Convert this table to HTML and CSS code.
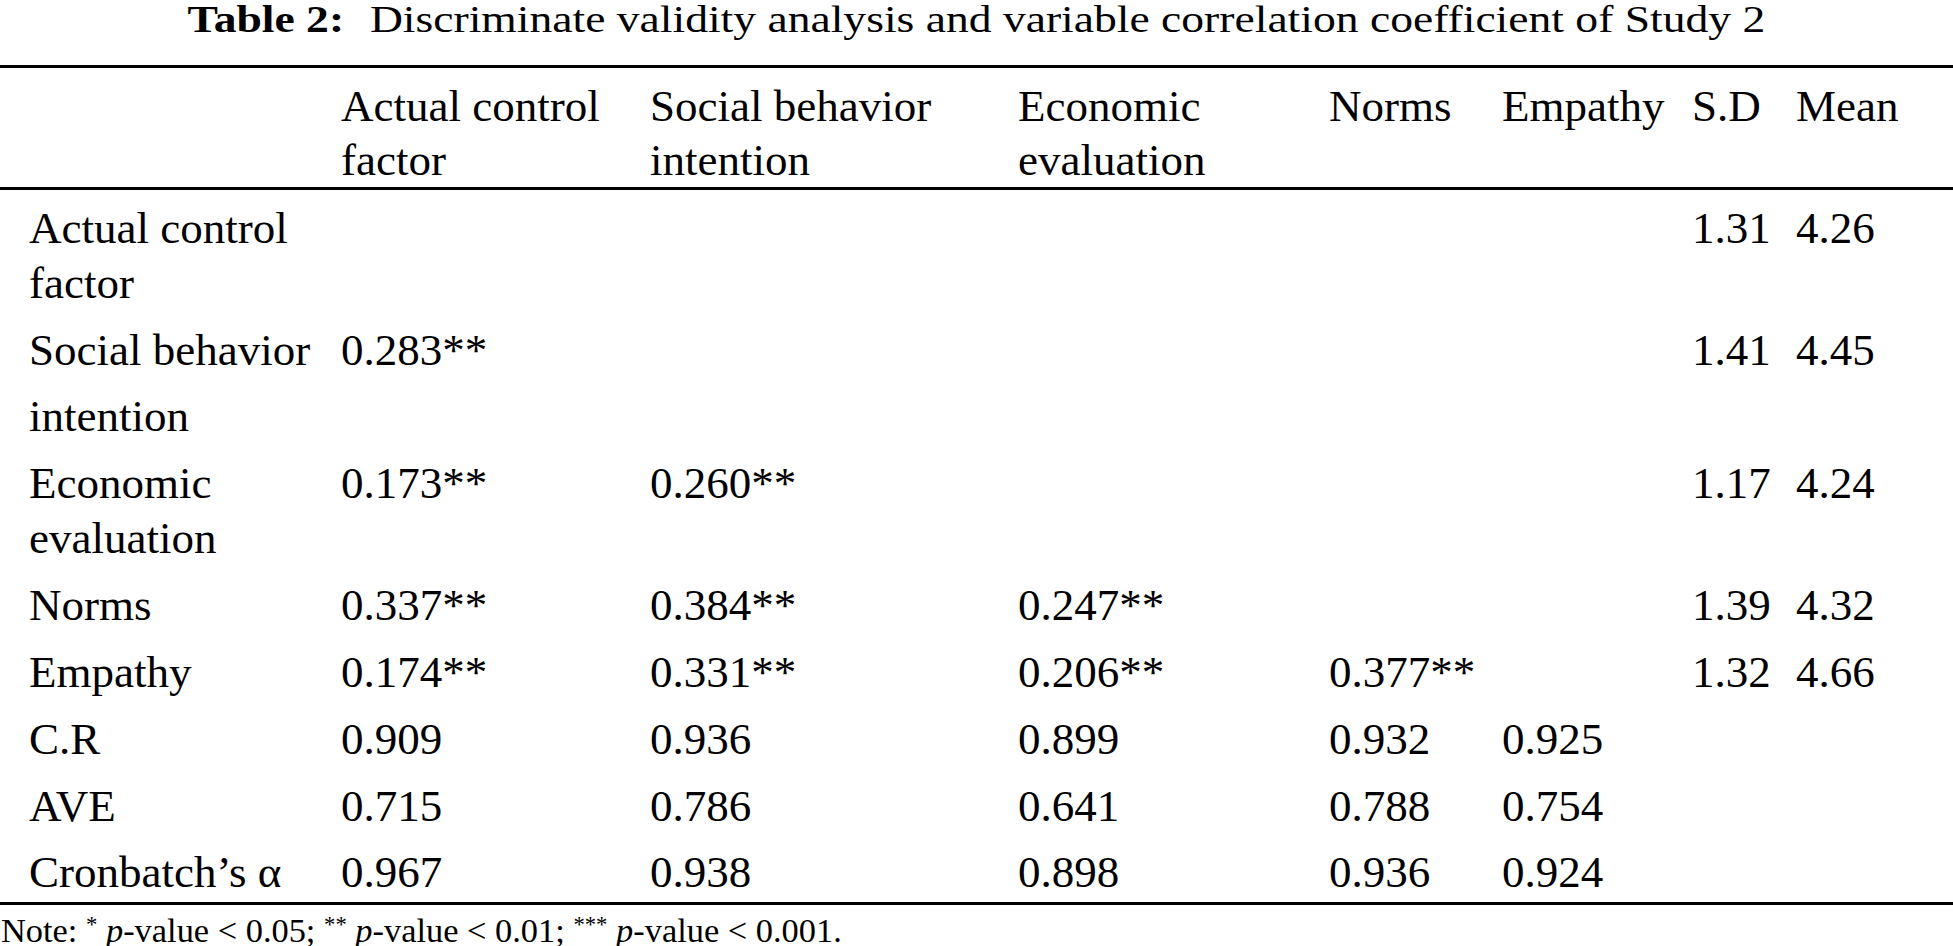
FILE: index.html
```html
<!DOCTYPE html>
<html lang="en">
<head>
<meta charset="utf-8">
<title>Table 2</title>
<link rel="stylesheet" href="styles.css">
</head>
<body>
<div class="caption"><span class="caption-inner"><b>Table 2:</b>Discriminate validity analysis and variable correlation coefficient of Study 2</span></div>
<table class="data">
  <colgroup>
    <col class="c0"><col class="c1"><col class="c2"><col class="c3"><col class="c4"><col class="c5"><col class="c6"><col class="c7">
  </colgroup>
  <thead>
    <tr>
      <th></th>
      <th>Actual control<br>factor</th>
      <th>Social behavior<br>intention</th>
      <th>Economic<br>evaluation</th>
      <th>Norms</th>
      <th>Empathy</th>
      <th>S.D</th>
      <th>Mean</th>
    </tr>
  </thead>
  <tbody>
    <tr>
      <td>Actual control<br>factor</td>
      <td></td><td></td><td></td><td></td><td></td>
      <td>1.31</td><td>4.26</td>
    </tr>
    <tr>
      <td><div>Social behavior</div><div class="lower">intention</div></td>
      <td>0.283**</td><td></td><td></td><td></td><td></td>
      <td>1.41</td><td>4.45</td>
    </tr>
    <tr>
      <td>Economic<br>evaluation</td>
      <td>0.173**</td><td>0.260**</td><td></td><td></td><td></td>
      <td>1.17</td><td>4.24</td>
    </tr>
    <tr>
      <td>Norms</td>
      <td>0.337**</td><td>0.384**</td><td>0.247**</td><td></td><td></td>
      <td>1.39</td><td>4.32</td>
    </tr>
    <tr>
      <td>Empathy</td>
      <td>0.174**</td><td>0.331**</td><td>0.206**</td><td>0.377**</td><td></td>
      <td>1.32</td><td>4.66</td>
    </tr>
    <tr>
      <td>C.R</td>
      <td>0.909</td><td>0.936</td><td>0.899</td><td>0.932</td><td>0.925</td>
      <td></td><td></td>
    </tr>
    <tr>
      <td>AVE</td>
      <td>0.715</td><td>0.786</td><td>0.641</td><td>0.788</td><td>0.754</td>
      <td></td><td></td>
    </tr>
    <tr>
      <td>Cronbatch’s α</td>
      <td>0.967</td><td>0.938</td><td>0.898</td><td>0.936</td><td>0.924</td>
      <td></td><td></td>
    </tr>
  </tbody>
</table>
<p class="note">Note: <sup>*</sup> <i>p</i>-value &lt; 0.05; <sup>**</sup> <i>p</i>-value &lt; 0.01; <sup>***</sup> <i>p</i>-value &lt; 0.001.</p>
</body>
</html>
```
FILE: styles.css
```css
html, body {
  margin: 0;
  padding: 0;
  background: #fff;
  overflow: hidden;
}

body {
  font-family: "Liberation Serif", "Times New Roman", serif;
  color: #000;
}

.caption {
  text-align: center;
  font-size: 37px;
  line-height: 39px;
  height: 39px;
  margin-bottom: 26px;
  white-space: nowrap;
}

.caption-inner {
  display: inline-block;
  transform: scaleX(1.232);
  transform-origin: center;
}

.caption-inner b {
  margin-right: 21px;
}

.data {
  width: 1953px;
  table-layout: fixed;
  border-collapse: separate;
  border-spacing: 0;
  border-top: 3px solid #000;
  border-bottom: 3px solid #000;
  font-size: 45px;
}

.c0 { width: 312px; }
.c1 { width: 309px; }
.c2 { width: 368px; }
.c3 { width: 311px; }
.c4 { width: 173px; }
.c5 { width: 190px; }
.c6 { width: 104px; }
.c7 { width: 186px; }

.data th {
  font-weight: normal;
  text-align: left;
  vertical-align: top;
  white-space: nowrap;
  line-height: 54px;
  padding: 10.8px 0 0 29px;
  border-bottom: 3px solid #000;
}

.data td {
  text-align: left;
  vertical-align: top;
  white-space: nowrap;
  line-height: 55px;
  padding: 10.8px 0 1.2px 29px;
}

.lower {
  margin-top: 11px;
}

.note {
  margin: 8px 0 0 1px;
  font-size: 34.4px;
  line-height: 34px;
  white-space: nowrap;
}

.note sup {
  font-size: 0.66em;
  line-height: 0;
  vertical-align: 0.45em;
}
```
